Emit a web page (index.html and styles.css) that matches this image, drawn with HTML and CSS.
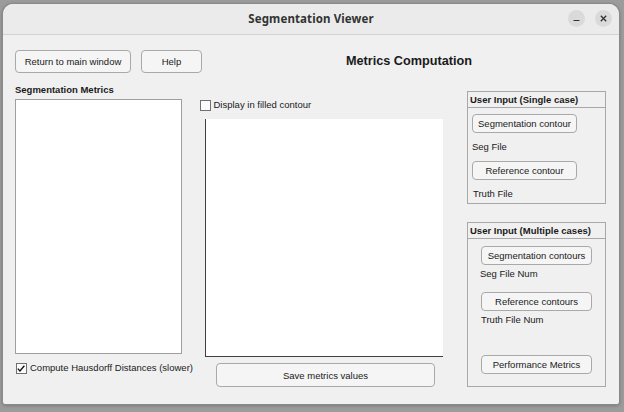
FILE: index.html
```html
<!DOCTYPE html>
<html>
<head>
<meta charset="utf-8">
<link rel="stylesheet" href="styles.css">
</head>
<body>
<div class="window">
  <div class="titlebar">
    <div></div>
    <div class="title">Segmentation Viewer</div>
    <div class="controls">
      <span class="ctl"><svg width="17" height="17" viewBox="0 0 17 17"><path d="M5.5 10.5h6" stroke="#333" stroke-width="1.2"/></svg></span>
      <span class="ctl"><svg width="17" height="17" viewBox="0 0 17 17"><path d="M5.8 5.8l5.4 5.4M11.2 5.8l-5.4 5.4" stroke="#333" stroke-width="1.3"/></svg></span>
    </div>
  </div>
  <div class="content">
    <div class="toprow">
      <button class="btn btn-return">Return to main window</button>
      <button class="btn btn-help">Help</button>
      <div class="heading">Metrics Computation</div>
    </div>
    <div class="columns">
      <div class="col-a">
        <div class="label-bold">Segmentation Metrics</div>
        <div class="listbox"></div>
        <label class="check check-a"><span class="box checked"><svg width="11" height="11" viewBox="0 0 11 11"><path d="M2 5.6l2.3 2.5L9.2 2.4" fill="none" stroke="#111" stroke-width="1.5"/></svg></span>Compute Hausdorff Distances (slower)</label>
      </div>
      <div class="col-b">
        <label class="check check-b"><span class="box"></span>Display in filled contour</label>
        <div class="axes"></div>
        <button class="btn btn-save">Save metrics values</button>
      </div>
      <div class="col-c">
        <div class="panel panel-single">
          <div class="panel-title">User Input (Single case)</div>
          <div class="panel-body">
            <button class="btn pbtn pbtn-1">Segmentation contour</button>
            <div class="ptext ptext-1">Seg File</div>
            <button class="btn pbtn pbtn-2">Reference contour</button>
            <div class="ptext ptext-2">Truth File</div>
          </div>
        </div>
        <div class="panel panel-multi">
          <div class="panel-title">User Input (Multiple cases)</div>
          <div class="panel-body multi-body">
            <button class="btn mbtn mbtn-1">Segmentation contours</button>
            <div class="ptext mtext-1">Seg File Num</div>
            <button class="btn mbtn mbtn-2">Reference contours</button>
            <div class="ptext mtext-2">Truth File Num</div>
            <button class="btn mbtn mbtn-3">Performance Metrics</button>
          </div>
        </div>
      </div>
    </div>
  </div>
</div>
</body>
</html>
```

FILE: styles.css
```css
* { box-sizing: border-box; }
html, body { margin: 0; padding: 0; }
body {
  width: 624px;
  height: 412px;
  background: #9c9c9c;
  padding: 4px 0 0 3px;
  font-family: "Liberation Sans", Arial, sans-serif;
  font-size: 9.5px;
  color: #1a1a1a;
  overflow: hidden;
}
.window {
  width: 616px;
  height: 400px;
  background: #f0f0f0;
  border-radius: 10px 10px 2px 2px;
  box-shadow: 0 0 0 1px #8a8a8a, 0 1px 4px rgba(0,0,0,0.35);
  overflow: hidden;
}
.titlebar {
  height: 31px;
  background: #ebebeb;
  border-bottom: 1px solid #d2d2d2;
  display: grid;
  grid-template-columns: 1fr auto 1fr;
  align-items: center;
}
.title {
  font-family: "Noto Sans", "DejaVu Sans", sans-serif;
  font-weight: 700;
  font-size: 11.5px;
  color: #333;
  letter-spacing: 0.1px;
  padding-bottom: 1px;
}
.controls {
  display: flex;
  justify-content: flex-end;
  gap: 10px;
  padding-right: 7px;
  padding-bottom: 1px;
}
.ctl {
  width: 17px;
  height: 17px;
  border-radius: 50%;
  background: #dadada;
  display: flex;
}
.content {
  padding: 15px 0 0 12px;
}
.toprow {
  display: flex;
  align-items: center;
  height: 23px;
}
.btn {
  font-family: "Liberation Sans", Arial, sans-serif;
  font-size: 9.5px;
  color: #1a1a1a;
  background: #f5f5f5;
  border: 1px solid #a9a9a9;
  border-radius: 4px;
  padding: 0;
  margin: 0;
  text-align: center;
}
.btn-return { width: 116px; height: 23px; }
.btn-help { width: 61px; height: 23px; margin-left: 10px; }
.heading {
  flex: 1;
  text-align: center;
  font-weight: 700;
  font-size: 12.7px;
  padding-right: 3px;
  padding-bottom: 2px;
}
.columns {
  display: flex;
  align-items: flex-start;
}
.col-a {
  width: 184px;
  padding-top: 11px;
  display: flex;
  flex-direction: column;
}
.label-bold {
  font-weight: 700;
  line-height: 12px;
  height: 12px;
}
.listbox {
  margin-top: 3px;
  width: 167px;
  height: 255px;
  background: #fff;
  border: 1px solid #9f9f9f;
}
.check {
  display: flex;
  align-items: center;
  height: 12px;
  line-height: 12px;
  white-space: nowrap;
}
.box {
  width: 11px;
  height: 11px;
  border: 1px solid #707070;
  background: #fbfbfb;
  display: flex;
  flex: none;
}
.box svg { margin: -1px 0 0 -1px; }
.check-a { margin-top: 8px; padding-left: 1px; }
.check-a .box { margin-right: 3px; }
.col-b {
  width: 244px;
  padding-top: 26px;
  display: flex;
  flex-direction: column;
}
.check-b { padding-left: 0.5px; }
.check-b .box { margin-right: 3px; }
.axes {
  margin-top: 8px;
  margin-left: 6px;
  width: 238px;
  height: 238px;
  background: #fff;
  border-left: 1px solid #404040;
  border-bottom: 1px solid #404040;
}
.btn-save {
  margin-top: 6px;
  margin-left: 17px;
  width: 219px;
  height: 24px;
}
.col-c {
  margin-left: 24px;
  padding-top: 18px;
  display: flex;
  flex-direction: column;
  gap: 18px;
}
.panel {
  width: 139px;
  border: 1px solid #a8a8a8;
  display: flex;
  flex-direction: column;
}
.panel-single { height: 113px; }
.panel-multi { height: 165px; }
.panel-title {
  height: 16px;
  line-height: 15px;
  border-bottom: 1px solid #a8a8a8;
  font-weight: 700;
  padding-left: 2px;
  white-space: nowrap;
}
.panel-body {
  display: flex;
  flex-direction: column;
  align-items: flex-start;
  padding-left: 4px;
}
.ptext { line-height: 12px; height: 12px; }
.pbtn { width: 105px; height: 19px; }
.pbtn-1 { margin-top: 6px; }
.ptext-1 { margin-top: 8px; }
.pbtn-2 { margin-top: 8px; }
.ptext-2 { margin-top: 8px; padding-left: 1px; }
.multi-body { padding-left: 13px; }
.mbtn { width: 111px; height: 19px; }
.mbtn-1 { margin-top: 7px; }
.mtext-1 { margin-top: 3px; margin-left: -1px; }
.mbtn-2 { margin-top: 12px; }
.mtext-2 { margin-top: 3px; }
.mbtn-3 { margin-top: 29px; }
```
